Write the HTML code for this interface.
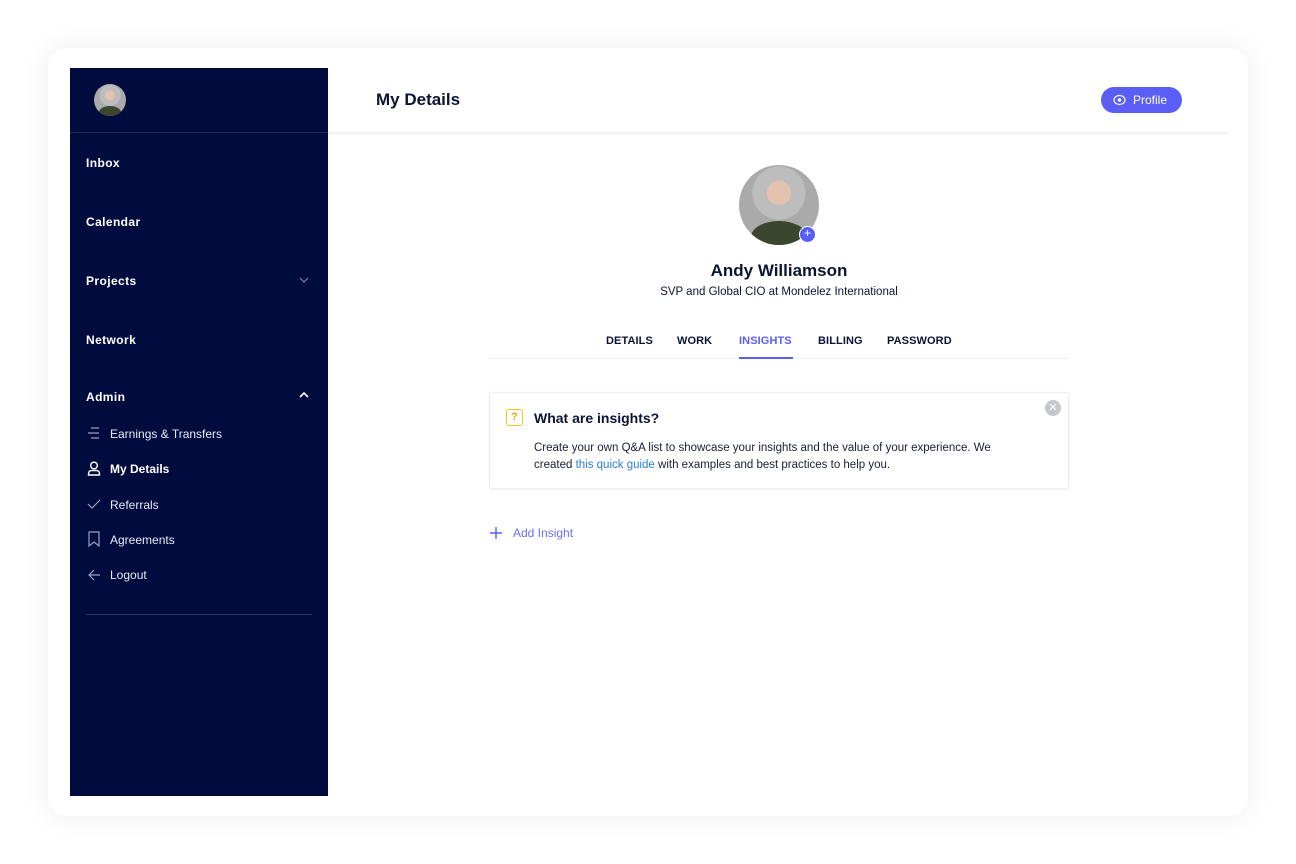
<!DOCTYPE html>
<html><head><meta charset="utf-8"><style>
*{box-sizing:border-box;margin:0;padding:0}
body{width:1296px;height:864px;background:#fff;font-family:"Liberation Sans",sans-serif;position:relative;overflow:hidden}
.card{position:absolute;left:48px;top:48px;width:1200px;height:768px;background:#fff;border-radius:18px;box-shadow:0 0 30px rgba(0,0,0,0.07)}
.side{position:absolute;left:70px;top:68px;width:258px;height:728px;background:#000b3e;color:#fff}
.side .top{height:65px;border-bottom:1px solid #1e2a5e;position:relative}
.av{position:absolute;border-radius:50%;background:radial-gradient(circle at 50% 35%,#e3c2b0 0 18%,#bdbdbd 19% 40%,#aaa 41%);overflow:hidden}
.av:after{content:"";position:absolute;left:15%;right:15%;bottom:-10%;height:40%;background:#3c4530;border-radius:50% 50% 0 0}
.nav{position:absolute;left:16px;font-size:12px;font-weight:bold;letter-spacing:.4px}
.sub{position:absolute;left:40px;font-size:12px;color:#e8eaf4}
.ic{position:absolute;left:17px}
.t{position:absolute;font-size:11px;font-weight:bold;color:#0b1433;letter-spacing:.1px}
</style></head><body>
<div class="card"></div>
<div class="side">
 <div class="top"><div class="av" style="left:24px;top:16px;width:32px;height:32px"></div></div>
 <div class="nav" style="top:88px">Inbox</div>
 <div class="nav" style="top:147px">Calendar</div>
 <div class="nav" style="top:206px">Projects</div>
 <svg style="position:absolute;left:229px;top:208px" width="10" height="8"><path d="M1 2l4 4 4-4" stroke="#8a90b0" fill="none" stroke-width="1"/></svg>
 <div class="nav" style="top:265px">Network</div>
 <div class="nav" style="top:322px">Admin</div>
 <svg style="position:absolute;left:229px;top:323px" width="10" height="8"><path d="M1 6l4-4 4 4" stroke="#fff" fill="none" stroke-width="1.6"/></svg>
 <svg class="ic" style="top:358px" width="14" height="14"><path d="M4 2h8M1 7h11M4 12h8" stroke="#9aa0c0" stroke-width="1.2"/></svg>
 <div class="sub" style="top:359px">Earnings &amp; Transfers</div>
 <svg class="ic" style="top:393px" width="14" height="15"><circle cx="7" cy="4.5" r="3.3" stroke="#fff" fill="none" stroke-width="1.4"/><path d="M1.5 14v-1.5a3 3 0 013-3h5a3 3 0 013 3V14z" stroke="#fff" fill="none" stroke-width="1.4"/></svg>
 <div class="sub" style="top:394px;font-weight:bold;color:#fff">My Details</div>
 <svg class="ic" style="top:429px" width="14" height="14"><path d="M1 7l4 4 8-8" stroke="#9aa0c0" fill="none" stroke-width="1.2"/></svg>
 <div class="sub" style="top:430px">Referrals</div>
 <svg class="ic" style="top:463px" width="14" height="16"><path d="M2 1h10v14l-5-4-5 4z" stroke="#9aa0c0" fill="none" stroke-width="1.2"/></svg>
 <div class="sub" style="top:465px">Agreements</div>
 <svg class="ic" style="top:500px" width="14" height="14"><path d="M13 7H2M7 2L2 7l5 5" stroke="#9aa0c0" fill="none" stroke-width="1.2"/></svg>
 <div class="sub" style="top:500px">Logout</div>
 <div style="position:absolute;left:16px;top:546px;width:226px;height:1px;background:#2a3566"></div>
</div>
<div style="position:absolute;left:376px;top:90px;font-size:17px;font-weight:bold;color:#0b1433">My Details</div>
<div style="position:absolute;left:1101px;top:87px;width:81px;height:26px;border-radius:13px;background:#5b5ef4;color:#fff;font-size:12px;line-height:26px;padding-left:32px">Profile</div>
<svg style="position:absolute;left:1113px;top:94px" width="13" height="12"><ellipse cx="6.5" cy="6" rx="5.5" ry="4.5" stroke="#fff" fill="none" stroke-width="1.2"/><circle cx="6.5" cy="6" r="1.8" fill="#fff"/></svg>
<div style="position:absolute;left:328px;top:132px;width:900px;height:3px;background:linear-gradient(#eee,#fafafa)"></div>
<div class="av" style="left:739px;top:165px;width:80px;height:80px"></div>
<div style="position:absolute;left:799px;top:226px;width:17px;height:17px;border-radius:50%;background:#5b5ef4;border:1.5px solid #fff;color:#fff;font-size:12px;line-height:13px;text-align:center">+</div>
<div style="position:absolute;left:580px;width:398px;top:261px;text-align:center;font-size:17px;font-weight:bold;color:#0b1433">Andy Williamson</div>
<div style="position:absolute;left:580px;width:398px;top:286px;text-align:center;font-size:11.5px;color:#0b1433">SVP and Global CIO at Mondelez International</div>
<div class="t" style="left:606px;top:335px">DETAILS</div>
<div class="t" style="left:677px;top:335px">WORK</div>
<div class="t" style="left:739px;top:335px;color:#5b5ef4">INSIGHTS</div>
<div class="t" style="left:818px;top:335px">BILLING</div>
<div class="t" style="left:887px;top:335px">PASSWORD</div>
<div style="position:absolute;left:489px;top:358px;width:580px;height:1px;background:#eceef2"></div>
<div style="position:absolute;left:739px;top:357px;width:54px;height:2px;background:#5b5ef4"></div>
<div style="position:absolute;left:489px;top:392px;width:580px;height:97px;border:1px solid #eee;border-radius:3px;box-shadow:0 1px 4px rgba(0,0,0,0.06)"></div>
<div style="position:absolute;left:506px;top:409px;width:17px;height:17px;border:1.6px solid #f3c623;border-radius:3px;color:#e0b000;font-size:11px;font-weight:bold;text-align:center;line-height:14px">?</div>
<div style="position:absolute;left:534px;top:410px;font-size:14px;font-weight:bold;color:#0b1433">What are insights?</div>
<div style="position:absolute;left:1045px;top:400px;width:16px;height:16px;border-radius:50%;background:#c4c7ce;color:#fff;font-size:11px;text-align:center;line-height:16px">✕</div>
<div style="position:absolute;left:534px;top:440px;width:500px;font-size:11.5px;line-height:16.5px;color:#1a1f33">Create your own Q&amp;A list to showcase your insights and the value of your experience. We<br>created <span style="color:#2a7de1">this quick guide</span> with examples and best practices to help you.</div>
<svg style="position:absolute;left:489px;top:526px" width="14" height="14"><path d="M7 1v12M1 7h12" stroke="#5b5ef4" stroke-width="1.4"/></svg>
<div style="position:absolute;left:513px;top:526px;font-size:12px;color:#6b6ef0">Add Insight</div>
</body></html>
